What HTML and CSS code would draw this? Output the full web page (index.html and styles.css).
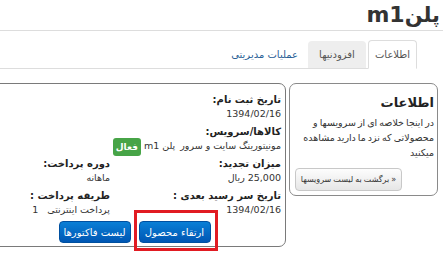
FILE: index.html
```html
<!DOCTYPE html>
<html lang="fa" dir="rtl">
<head>
<meta charset="utf-8">
<link rel="stylesheet" href="styles.css">
</head>
<body>
<div class="page">
  <header class="page-header">
    <h1 class="title">پلن<span class="latin">m1</span></h1>
  </header>
  <ul class="tabs">
    <li class="tab tab-active">اطلاعات</li>
    <li class="tab tab-gray">افزودنیها</li>
    <li class="tab tab-link">عملیات مدیریتی</li>
  </ul>
  <div class="content">
    <aside class="info-box">
      <h2 class="info-title">اطلاعات</h2>
      <p class="info-text">در اینجا خلاصه ای از سرویسها و محصولاتی که نزد ما دارید مشاهده میکنید</p>
      <div class="back-row"><span class="btn-back">« برگشت به لیست سرویسها</span></div>
    </aside>
    <section class="details">
      <div class="row">
        <div class="field col1">
          <div class="label">تاریخ ثبت نام:</div>
          <div class="value num">1394/02/16</div>
        </div>
      </div>
      <div class="row">
        <div class="field">
          <div class="label">کالاها/سرویس:</div>
          <div class="value service"><span>مونیتورینگ سایت و سرور</span><span class="plan">پلن <span class="latin">m1</span></span><span class="badge">فعال</span></div>
        </div>
      </div>
      <div class="row">
        <div class="field col1">
          <div class="label">میزان تجدید:</div>
          <div class="value"><span class="num">25,000</span> ریال</div>
        </div>
        <div class="field col2">
          <div class="label">دوره پرداخت:</div>
          <div class="value">ماهانه</div>
        </div>
      </div>
      <div class="row">
        <div class="field col1">
          <div class="label">تاریخ سر رسید بعدی :</div>
          <div class="value num">1394/02/16</div>
        </div>
        <div class="field col2">
          <div class="label">طریقه پرداخت :</div>
          <div class="value">پرداخت اینترنتی <span class="num one">1</span></div>
        </div>
      </div>
      <div class="actions">
        <span class="highlight"><span class="btn-primary">ارتقاء محصول</span></span>
        <span class="btn-primary">لیست فاکتورها</span>
      </div>
    </section>
  </div>
</div>
</body>
</html>
```
FILE: styles.css
```css
html, body {
  margin: 0;
  padding: 0;
  overflow: hidden;
  background: #fff;
}
body {
  width: 443px;
  height: 262px;
  font-family: "DejaVu Sans", sans-serif;
  font-size: 10px;
  color: #333;
  direction: rtl;
}
.page {
  width: 443px;
}
.page-header {
  border-bottom: 1px solid #ddd;
  height: 31px;
  box-sizing: border-box;
  padding-right: 3px;
}
.title {
  margin: 0;
  font-size: 21px;
  line-height: 30px;
  font-weight: bold;
  color: #333;
  display: flex;
  align-items: baseline;
}
.title .latin {
  font-family: "DejaVu Sans", sans-serif;
  font-size: 22px;
}
.tabs {
  list-style: none;
  margin: 9px 26px 0 0;
  padding: 0;
  display: flex;
  align-items: flex-end;
  height: 28px;
  border-bottom: 1px solid #ddd;
}
.tab {
  height: 27px;
  line-height: 27px;
  font-size: 10px;
  box-sizing: border-box;
  border-radius: 4px 4px 0 0;
  margin-left: 2px;
}
.tab-active {
  background: #fff;
  border: 1px solid #ddd;
  border-bottom-color: #fff;
  height: 29px;
  margin-bottom: -1px;
  color: #555;
  width: 49px;
  text-align: center;
}
.tab-gray {
  background: #eee;
  color: #555;
  width: 58px;
  text-align: center;
  margin-left: 10px;
}
.tab-link {
  color: #2a5f96;
}
.content {
  display: flex;
  flex-direction: row;
  margin-top: 14px;
  padding-right: 5px;
  gap: 3px;
  align-items: flex-start;
}
.info-box {
  flex: 0 0 auto;
  width: 149px;
  box-sizing: border-box;
  border: 1px solid #8a8a8a;
  border-radius: 7px;
  padding: 11px 3px 4px 3px;
}
.info-title {
  margin: 0 0 4px 0;
  font-size: 13px;
  line-height: 16px;
  font-weight: bold;
  color: #222;
}
.info-text {
  margin: 0;
  font-size: 9.5px;
  line-height: 15px;
  word-spacing: -1px;
  color: #333;
}
.back-row {
  display: flex;
  justify-content: flex-end;
  margin-top: 8px;
  margin-left: 2px;
}
.btn-back {
  display: inline-block;
  width: 107px;
  height: 23px;
  line-height: 22px;
  box-sizing: border-box;
  border: 1px solid #c8c8c8;
  border-radius: 4px;
  background: linear-gradient(#fdfdfd, #e6e6e6);
  text-align: center;
  font-size: 8px;
  word-spacing: -0.5px;
  color: #333;
  white-space: nowrap;
}
.details {
  flex: 0 0 auto;
  width: 303px;
  height: 164px;
  box-sizing: border-box;
  border: 1px solid #7a7a7a;
  border-radius: 7px;
  padding: 9px 4px 0 0;
}
.row {
  display: flex;
  margin-bottom: 5px;
}
.field {
  flex: 0 0 auto;
}
.col1 {
  width: 171px;
}
.label {
  font-weight: bold;
  font-size: 10px;
  line-height: 14px;
  color: #222;
}
.value {
  font-size: 9.5px;
  line-height: 13px;
  color: #333;
}
.service {
  display: flex;
  align-items: center;
  height: 13px;
}
.plan {
  margin-right: 5px;
}
.badge {
  display: inline-block;
  background: #47a447;
  color: #fff;
  font-weight: bold;
  font-size: 9px;
  line-height: 18px;
  height: 18px;
  padding: 0 3px;
  border-radius: 3px;
  margin-right: 3px;
  position: relative;
  top: 1px;
}
.one {
  margin-right: 6px;
}
.actions {
  display: flex;
  justify-content: center;
  gap: 8px;
  margin-top: 5px;
  margin-right: -4px;
}
.highlight {
  position: relative;
  display: inline-block;
}
.highlight::after {
  content: "";
  position: absolute;
  top: -11px;
  bottom: -8px;
  left: -5px;
  right: -7px;
  border: 3px solid #e11b22;
}
.btn-primary {
  display: inline-block;
  width: 72px;
  height: 22px;
  line-height: 21px;
  box-sizing: border-box;
  border: 1px solid #0050a0;
  border-radius: 4px;
  background: linear-gradient(#0a7fd6, #0056b3);
  color: #fff;
  text-align: center;
  font-size: 10px;
  white-space: nowrap;
}
```
